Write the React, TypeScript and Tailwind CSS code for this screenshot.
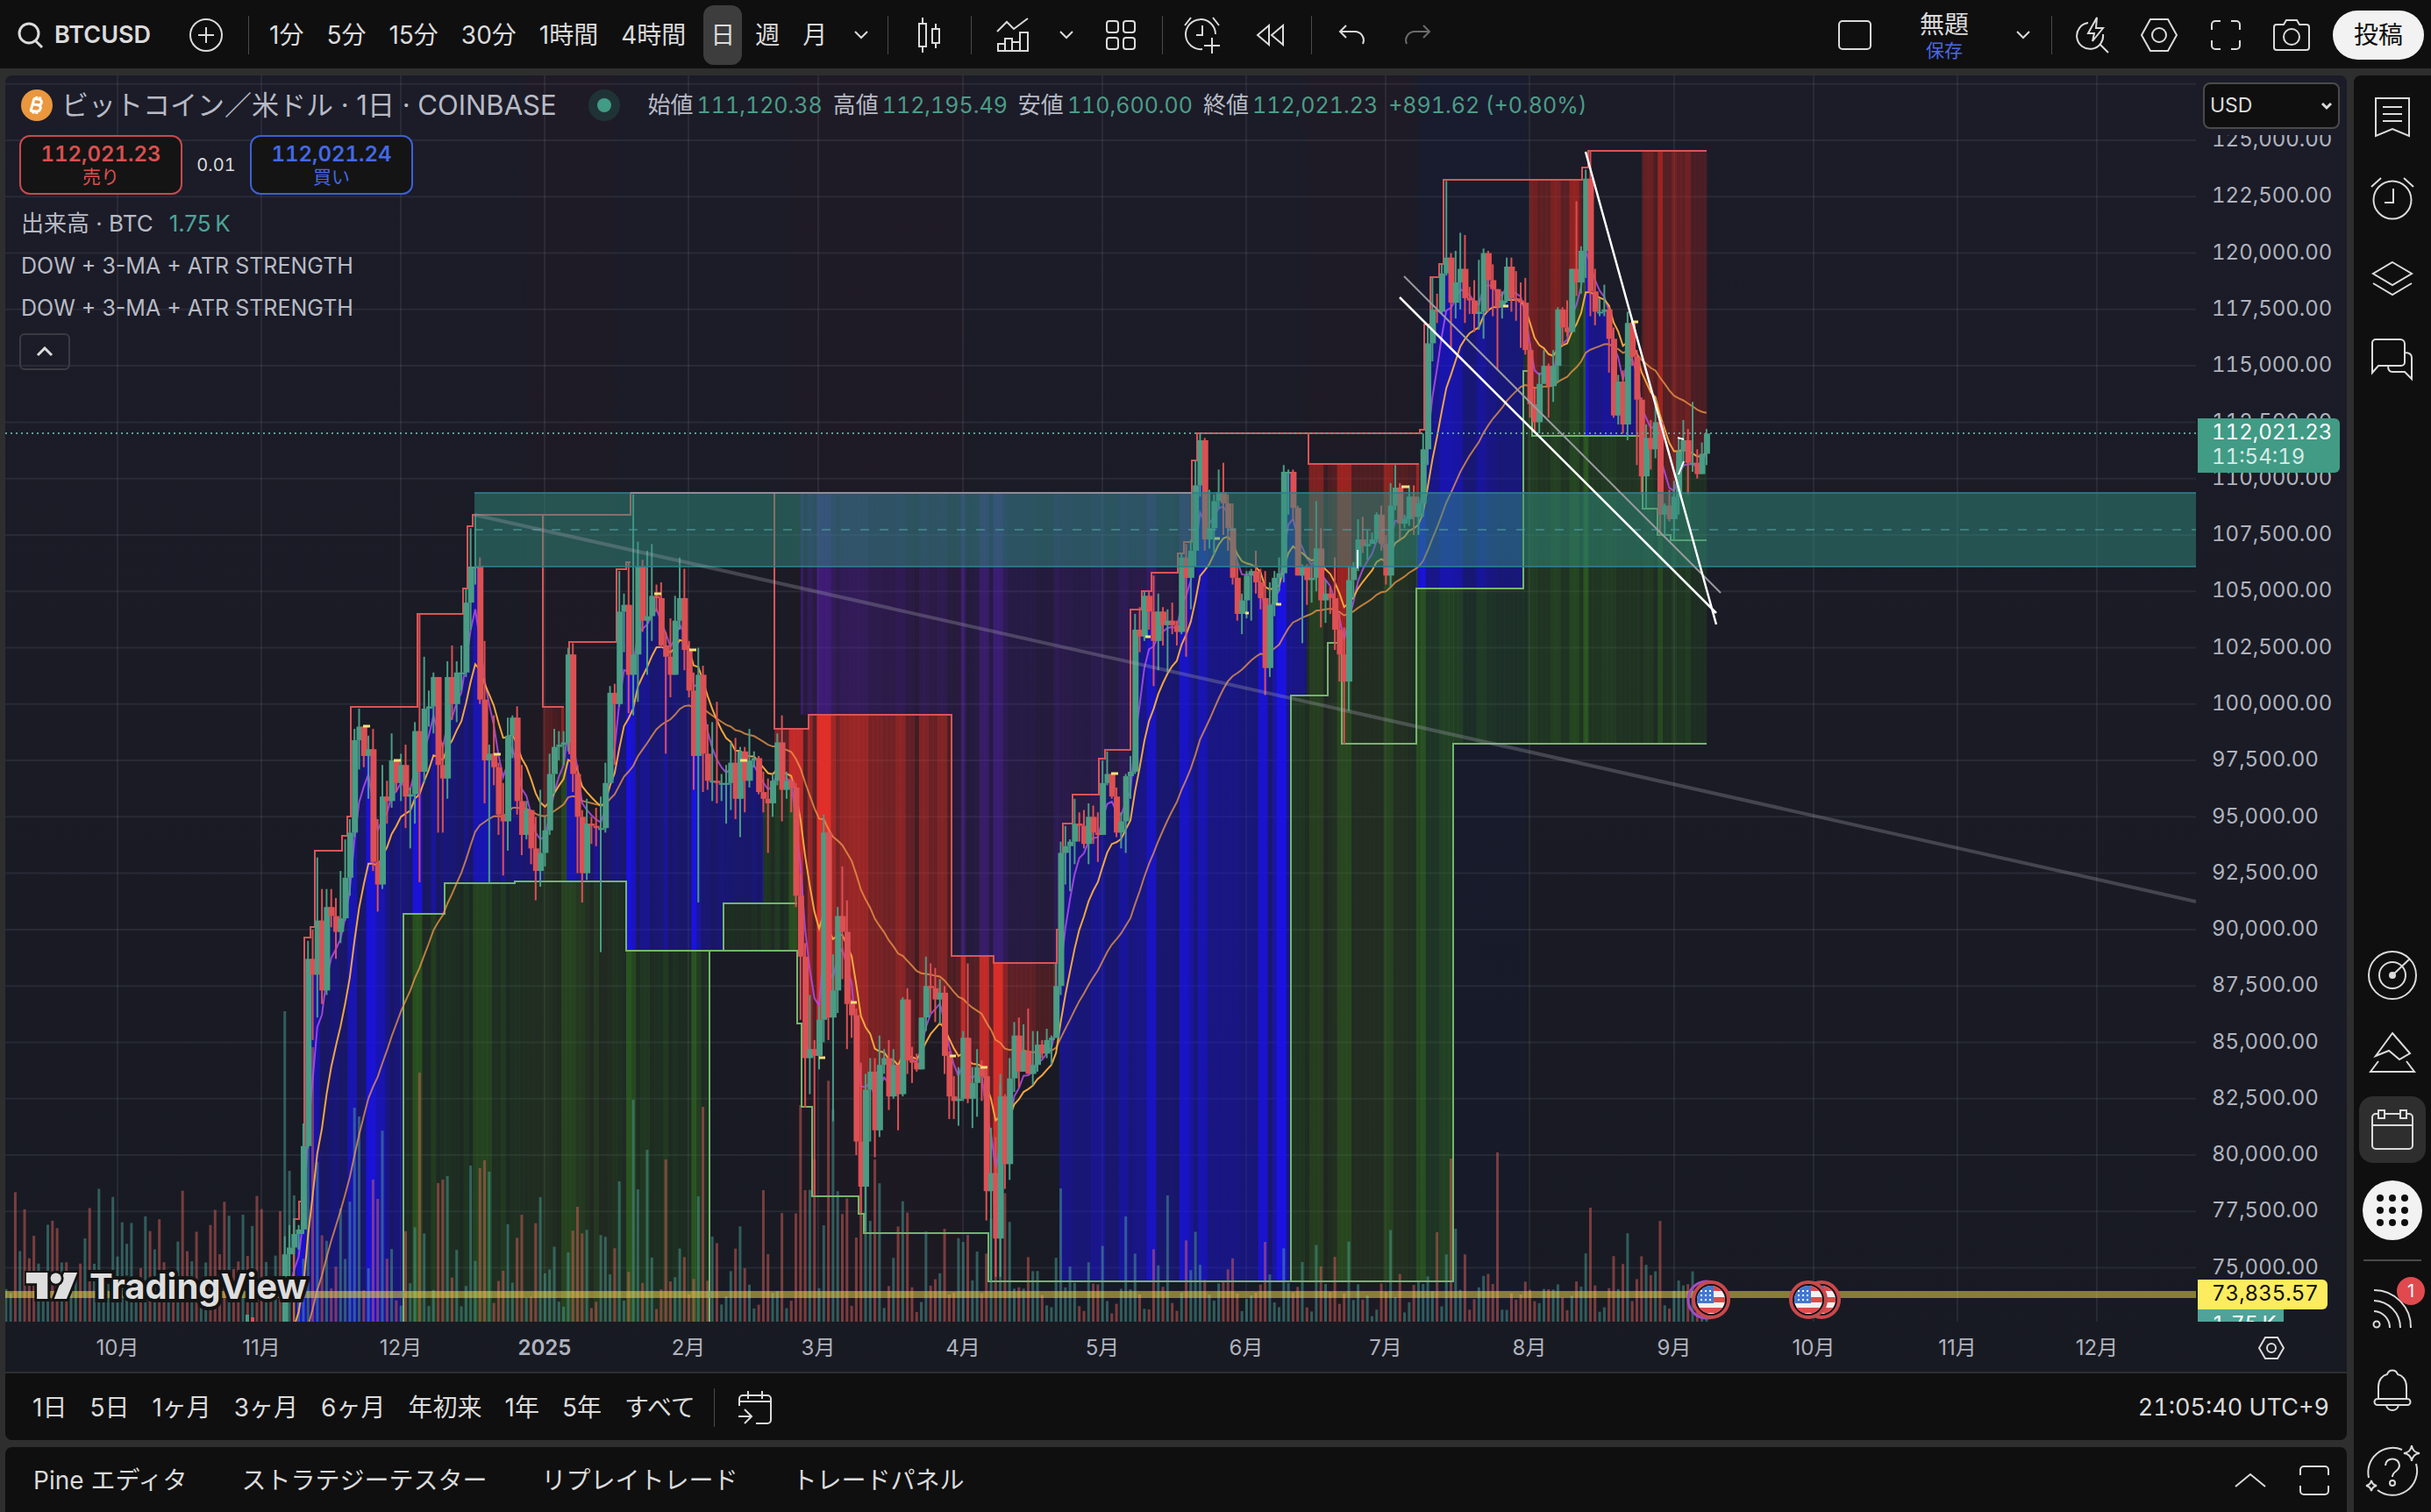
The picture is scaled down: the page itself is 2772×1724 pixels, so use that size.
import React from 'react';

// [close, high, low] in thousands of USD, one entry per day. Open is the previous close.
const NOV = [75.6,76.4,69.3, 75.9,76.9,74.5, 76.5,77.2,75.6, 76.7,76.9,75.8, 80.4,81.4,76.5, 88.7,89.5,80.3, 88.0,90.0,85.1, 90.4,93.2,86.1, 87.3,91.8,86.7, 91.0,91.8,87.1, 90.6,91.8,90.1, 89.9,91.4,88.7, 90.5,92.6,89.4, 92.3,94.0,90.4, 94.3,94.9,91.5, 98.4,98.9,94.1, 99.0,99.8,97.1, 97.7,98.9,97.2, 98.0,98.6,95.8, 93.0,98.9,92.6, 92.0,94.9,90.8, 95.9,97.3,91.8, 95.7,96.6,94.7, 97.5,98.7,95.4, 96.5,97.5,96.1];
const DEC = [97.3,97.8,95.7, 95.9,98.2,94.5, 96.0,96.3,93.6, 98.8,99.2,94.7, 97.0,104.0,92.1, 99.8,102.1,96.5, 99.9,100.6,99.0, 101.2,101.4,98.7, 97.3,101.2,94.3, 96.7,98.3,94.3, 101.2,101.9,95.8, 100.0,102.6,99.3, 101.4,101.9,99.2, 101.4,102.6,100.6, 104.5,105.1,101.2, 106.1,107.8,103.3, 106.1,108.4,105.3, 100.2,106.5,100.0, 97.5,102.8,95.6, 97.8,98.2,92.1, 97.2,99.5,96.4, 95.1,97.4,94.2, 94.8,96.5,92.4, 98.6,99.4,93.5, 99.4,99.5,97.6, 95.7,99.9,95.1, 94.2,97.3,93.3, 95.3,95.7,94.0, 93.6,95.3,92.9, 92.6,95.0,91.3, 93.4,96.2,91.9];
const JAN = [94.4,95.0,92.8, 96.9,97.8,94.2, 98.1,98.9,96.0, 98.2,98.8,97.5, 98.3,98.8,97.3, 102.2,102.5,97.9, 96.9,102.7,96.1, 95.0,97.3,92.5, 92.5,95.3,91.2, 94.7,95.8,92.2, 94.6,95.0,93.8, 94.5,95.4,93.7, 94.5,95.9,89.0, 96.5,97.4,94.3, 100.5,100.8,96.5, 100.0,100.9,97.3, 104.1,105.9,99.9, 104.4,104.9,102.3, 101.3,106.3,99.6, 102.2,109.3,99.5, 106.1,107.2,100.1, 103.7,106.4,103.2, 103.9,106.8,101.3, 104.8,107.1,102.8, 104.7,105.3,104.1, 102.6,105.4,102.5, 102.1,103.2,97.8, 101.3,103.8,100.3, 103.7,104.8,101.3, 104.7,106.5,103.3, 102.4,106.0,101.5];
const FEB = [100.6,102.8,100.3, 97.7,101.4,96.2, 101.3,102.5,91.2, 97.8,101.7,96.1, 96.6,99.1,96.2, 96.6,99.2,95.7, 96.5,100.1,95.6, 96.5,96.9,95.7, 96.5,97.3,94.7, 97.4,98.3,95.3, 95.8,98.5,94.9, 97.9,98.1,94.1, 96.6,98.1,95.2, 97.5,98.9,96.3, 97.6,97.9,97.2, 96.1,97.7,96.0, 95.8,97.0,95.2, 95.6,96.7,93.4, 96.6,96.9,95.0, 98.3,98.7,96.4, 96.2,99.5,94.8, 96.6,97.0,95.8, 96.3,96.7,95.2, 91.5,96.5,91.0, 88.8,92.5,86.0, 84.3,89.4,82.1, 84.7,87.1,82.7, 84.4,85.1,78.2];
const MAR = [86.0,86.6,83.8, 94.3,95.1,85.0, 86.1,94.4,85.1, 87.3,88.9,81.5, 90.6,91.0,86.3, 89.9,92.8,87.8, 86.7,91.3,84.7, 86.2,86.9,85.2, 80.6,86.5,80.0, 78.6,84.1,77.4, 82.9,83.6,76.6, 83.7,84.3,80.6, 81.1,84.3,79.9, 84.0,85.3,80.8, 84.3,84.7,83.6, 82.6,85.1,82.0, 84.0,84.7,82.5, 82.7,84.0,81.1, 86.9,87.0,82.6, 84.2,87.4,83.6, 84.1,84.8,83.2, 83.8,84.5,83.7, 86.1,86.1,83.8, 87.5,88.8,85.5, 87.4,88.5,86.3, 86.9,88.3,85.9, 87.2,87.8,85.8, 84.4,87.5,83.6, 82.6,84.6,81.6, 82.4,83.5,81.6, 82.5,83.9,81.3];
const APR = [85.2,85.5,82.4, 82.5,88.5,82.3, 83.2,83.9,81.2, 83.9,84.7,81.7, 83.5,84.2,82.4, 78.4,83.8,77.1, 79.2,81.2,74.4, 76.3,80.8,74.6, 82.6,83.6,74.6, 79.6,82.7,78.5, 83.4,84.3,78.9, 85.3,85.9,82.8, 83.7,86.1,83.0, 84.6,85.8,83.7, 83.6,86.5,83.6, 84.0,85.5,83.1, 84.9,85.5,83.7, 84.5,85.1,84.3, 85.1,85.6,84.3, 85.2,85.3,84.0, 87.5,88.5,85.2, 93.4,93.9,87.1, 93.7,94.6,92.0, 93.9,94.0,91.7, 94.7,95.8,92.9, 94.6,95.2,93.9, 93.8,95.3,93.6, 95.0,95.6,92.9, 94.3,95.5,93.8, 94.2,95.2,93.0];
const MAY = [96.5,97.5,94.2, 96.9,97.9,96.4, 95.9,96.9,95.8, 94.3,96.3,94.1, 94.8,95.2,93.6, 96.8,96.9,93.4, 97.0,97.7,95.8, 103.3,104.0,96.9, 103.0,104.3,102.3, 104.8,105.0,102.8, 104.1,105.0,103.3, 102.8,105.7,100.8, 104.1,104.9,101.5, 103.5,104.3,102.6, 103.7,104.2,101.4, 103.5,104.5,103.1, 103.2,103.7,102.6, 106.5,106.7,103.1, 105.6,107.1,102.1, 106.8,107.3,104.2, 109.7,110.8,106.1, 111.7,112.0,109.2, 107.3,111.8,106.8, 107.8,109.5,106.9, 109.0,109.3,106.6, 109.4,110.4,108.7, 108.9,110.7,107.5, 107.8,109.3,106.8, 105.6,108.9,105.3, 104.0,106.3,103.7, 104.6,104.9,103.1];
const JUN = [105.7,105.9,103.8, 105.9,106.0,103.7, 105.4,106.8,104.9, 104.7,106.0,104.2, 101.6,105.9,100.4, 104.4,105.4,101.2, 105.6,105.9,103.9, 105.8,106.5,105.0, 110.3,110.6,105.4, 110.3,110.4,108.4, 108.7,110.4,108.1, 105.7,108.8,105.7, 106.1,106.2,102.7, 105.5,106.2,104.4, 105.6,106.1,104.5, 106.9,109.0,105.0, 104.6,107.8,103.4, 104.9,105.5,103.6, 104.7,105.2,104.0, 103.3,106.5,102.4, 102.2,104.0,101.0, 101.0,103.4,98.2, 105.5,106.1,99.7, 106.1,106.3,104.7, 107.3,108.2,105.9, 107.0,108.3,106.7, 107.1,107.7,106.4, 107.3,107.6,107.2, 108.4,108.5,107.2, 107.1,108.8,106.8];
const JUL = [105.7,107.5,105.3, 108.8,109.8,105.2, 109.6,110.6,108.6, 108.0,109.8,107.3, 108.2,108.4,107.8, 109.2,109.7,107.9, 108.3,109.7,107.5, 108.9,109.2,107.5, 111.3,112.0,108.3, 116.0,116.8,110.6, 117.5,118.9,115.2, 117.4,118.2,116.9, 119.1,119.5,117.3, 119.8,123.2,119.0, 117.8,120.0,115.8, 118.7,120.1,117.1, 119.3,120.9,117.5, 118.0,120.8,116.9, 117.9,118.5,117.3, 117.3,118.8,116.5, 117.4,119.7,116.6, 120.0,120.2,116.2, 118.8,120.1,117.4, 118.4,119.5,117.2, 117.6,118.4,114.8, 117.9,118.3,117.1, 119.4,119.8,117.8, 118.0,119.8,117.4, 117.9,119.2,117.0, 117.8,118.7,115.8, 115.7,118.9,115.5];
const AUG = [113.3,116.0,112.7, 112.5,114.0,112.0, 114.2,114.7,112.0, 115.0,115.7,114.2, 114.1,115.1,112.7, 115.0,115.7,113.4, 117.5,117.6,114.3, 116.7,117.6,115.9, 116.5,117.9,116.3, 119.3,119.3,116.5, 118.7,122.3,118.1, 120.1,120.3,118.2, 123.3,123.7,118.9, 118.3,124.5,117.2, 117.4,119.3,116.8, 117.4,118.0,117.2, 117.5,118.6,117.2, 116.2,117.6,114.7, 112.8,116.7,112.7, 114.3,114.6,112.4, 112.4,114.8,112.0, 116.9,117.4,111.7, 115.4,117.0,115.0, 113.5,115.7,110.6, 110.1,113.6,109.3, 111.8,112.4,108.7, 111.3,112.6,110.4, 112.5,113.5,110.9, 108.4,112.6,107.5, 108.8,108.9,107.4, 108.2,109.5,108.1];
const SEP = [109.2,109.9,107.3, 111.2,111.8,108.4, 111.7,112.6,110.5, 110.7,112.2,109.3, 110.7,113.4,110.3, 110.2,111.3,110.0, 111.1,111.6,110.2, 112.0,112.2,110.6];
const FLAT = [...NOV, ...DEC, ...JAN, ...FEB, ...MAR, ...APR, ...MAY, ...JUN, ...JUL, ...AUG, ...SEP];

const FIRST_DAY = 36; // 6 Nov, counted from 1 Oct
const DAY_W = 5.298;
const PLOT_BOTTOM = 1507;
const UP = '#4a9c84';
const DOWN = '#dc5054';

const dayX = (d: number) => 134 + d * DAY_W;
const priceY = (p: number) => 160 + ((125 - p) / 2.5) * 64.28;
const noise = (n: number) => {
  const v = Math.sin(n * 127.1 + 311.7) * 43758.5453;
  return v - Math.floor(v);
};

interface Candle {
  d: number;
  open: number;
  close: number;
  high: number;
  low: number;
}

const candles: Candle[] = [];
for (let i = 0; i < FLAT.length; i += 3) {
  const prev = candles[candles.length - 1];
  candles.push({ d: FIRST_DAY + i / 3, open: prev ? prev.close : 69.4, close: FLAT[i], high: FLAT[i + 1], low: FLAT[i + 2] });
}

const emaPath = (length: number, seed: number) => {
  let value = seed;
  const k = 2 / (length + 1);
  return candles
    .map((c, i) => {
      value += (c.close - value) * k;
      return `${i ? 'L' : 'M'}${dayX(c.d).toFixed(1)} ${priceY(value).toFixed(1)}`;
    })
    .join('');
};

type Tone = 'blue' | 'green' | 'red' | 'maroon' | 'purple';
// tone, from x, to x, top, bottom; null follows the price
type Zone = [Tone, number, number, number | null, number | null];

const ZONES: Zone[] = [
  ['blue', 338, 460, null, 1507],
  ['blue', 460, 507, null, 1042],
  ['blue', 507, 619, null, 1006],
  ['green', 619, 646, null, 1006],
  ['blue', 646, 714, null, 1006],
  ['blue', 714, 825, null, 1084],
  ['blue', 825, 870, null, 1030],
  ['green', 870, 909, null, 1030],
  ['green', 825, 909, 1030, 1084],
  ['green', 460, 507, 1042, 1507],
  ['green', 507, 714, 1006, 1507],
  ['green', 714, 809, 1084, 1507],
  ['purple', 913, 1085, 562, 815],
  ['purple', 1085, 1133, 562, 1090],
  ['purple', 1133, 1205, 562, 1098],
  ['purple', 1205, 1359, 562, null],
  ['maroon', 619, 643, 806, null],
  ['red', 883, 922, 831, null],
  ['red', 922, 1085, 815, null],
  ['red', 1085, 1133, 1090, null],
  ['red', 1133, 1205, 1098, null],
  ['maroon', 1492, 1618, 529, null],
  ['maroon', 1744, 1804, 205, null],
  ['maroon', 1872, 1946, 172, null],
  ['blue', 1208, 1472, null, 1461],
  ['blue', 1472, 1490, null, 793],
  ['green', 1472, 1490, 793, 1461],
  ['green', 1490, 1616, null, 1461],
  ['blue', 1616, 1737, null, 671],
  ['green', 1616, 1657, 671, 1461],
  ['green', 1657, 1737, 671, 848],
  ['green', 1737, 1808, null, 848],
  ['blue', 1808, 1867, null, 497],
  ['green', 1808, 1867, 497, 848],
  ['green', 1867, 1946, null, 848],
];

const TONES: Record<Tone, { fill: string; base: number; span: number }> = {
  blue: { fill: '#1a12f5', base: 0.24, span: 0.7 },
  green: { fill: '#357a1e', base: 0.12, span: 0.5 },
  red: { fill: '#e8302a', base: 0.16, span: 0.8 },
  maroon: { fill: '#cc281f', base: 0.14, span: 0.8 },
  purple: { fill: '#5a1fb8', base: 0.12, span: 0.4 },
};

// ATR strength: from x, to x, level
const STRENGTH = [
  [338, 350, 0.8], [355, 362, 0.5], [397, 405, 0.6], [417, 426, 0.85], [426, 436, 0.6], [438, 444, 0.3], [472, 479, 0.85],
  [494, 499, 0.45], [505, 510, 0.45], [527, 535, 0.3], [541, 558, 0.6], [572, 579, 0.4], [584, 590, 0.2], [619, 628, 0.2],
  [642, 654, 0.6], [654, 666, 0.4], [679, 684, 0.4], [696, 706, 0.25], [713, 720, 0.95], [720, 727, 0.7], [732, 738, 0.35],
  [754, 760, 0.4], [777, 780, 0.3], [789, 796, 0.95], [796, 800, 0.5], [870, 876, 0.3], [886, 891, 0.4], [902, 918, 0.8],
  [922, 928, 0.5], [933, 945, 1], [945, 950, 0.6], [950, 958, 0.35], [959, 966, 0.5], [971, 987, 0.55], [987, 1003, 0.35],
  [1003, 1008, 0.02], [1008, 1024, 0.3], [1024, 1032, 0.45], [1032, 1040, 0.2], [1040, 1046, 0.02], [1046, 1056, 0.4],
  [1056, 1071, 0.25], [1071, 1078, 0.4], [1098, 1103, 0.75], [1118, 1130, 0.8], [1135, 1141, 0.95], [1141, 1150, 0.45],
  [1150, 1180, 0.2], [1180, 1203, 0.08], [1203, 1209, 0.45], [1209, 1225, 0.3], [1225, 1245, 0.2], [1246, 1258, 0.35],
  [1258, 1275, 0.15], [1277, 1286, 0.45], [1289, 1294, 1], [1294, 1308, 0.3], [1310, 1319, 0.7], [1319, 1339, 0.15],
  [1342, 1354, 0.75], [1354, 1362, 0.5], [1365, 1374, 0.6], [1374, 1412, 0.28], [1412, 1436, 0.22], [1437, 1447, 0.8],
  [1450, 1456, 0.5], [1458, 1464, 0.95], [1464, 1474, 0.3], [1474, 1485, 0.3], [1485, 1494, 0.1], [1495, 1510, 0.5],
  [1511, 1516, 0.02], [1517, 1526, 0.2], [1527, 1538, 0.7], [1538, 1578, 0.16], [1579, 1586, 0.6], [1586, 1602, 0.2],
  [1602, 1616, 0.15], [1617, 1622, 0.7], [1622, 1628, 0.9], [1628, 1643, 0.3], [1643, 1656, 0.55], [1656, 1670, 0.48],
  [1670, 1686, 0.15], [1686, 1693, 0.4], [1693, 1704, 0.25], [1704, 1740, 0.18], [1741, 1750, 0.4], [1750, 1770, 0.28],
  [1770, 1777, 0.5], [1777, 1790, 0.25], [1791, 1798, 0.65], [1798, 1807, 0.3], [1807, 1813, 0.95], [1813, 1828, 0.3],
  [1828, 1840, 0.4], [1840, 1870, 0.25], [1872, 1887, 0.35], [1888, 1893, 0.72], [1893, 1906, 0.22], [1906, 1914, 0.42],
  [1914, 1923, 0.3], [1923, 1930, 0.42], [1930, 1950, 0.15],
];

const strips = ZONES.flatMap(([tone, x0, x1, top, bottom]) => {
  const out = [];
  for (const c of candles) {
    const cx = dayX(c.d);
    const left = Math.max(cx - DAY_W / 2, x0);
    const right = Math.min(cx + DAY_W / 2, x1);
    if (right <= left) continue;
    const mid = priceY((c.open + c.close) / 2);
    const y0 = top ?? mid;
    const y1 = bottom ?? mid;
    if (y1 <= y0) continue;
    const t = TONES[tone];
    const hit = STRENGTH.find(([a, b]) => cx >= a && cx < b);
    const level = hit ? hit[2] : 0.06 + noise(c.d + 900) * 0.16;
    out.push({ x: left, y: y0, w: right - left + 0.4, h: y1 - y0, fill: t.fill, o: t.base + t.span * level });
  }
  return out;
});

const TALL: Record<number, number> = {
  36: 354, 37: 172, 38: 144, 41: 331, 42: 313, 43: 182, 51: 244, 52: 234, 55: 162, 56: 140, 65: 284, 69: 158, 70: 162, 71: 166,
  76: 178, 78: 175, 79: 184, 80: 171, 99: 131, 108: 160, 111: 253, 112: 151, 114: 196, 118: 185, 126: 245, 139: 150,
  147: 247, 148: 150, 150: 185, 163: 185, 203: 152, 217: 120, 226: 144, 284: 102, 288: 106, 287: 186, 297: 193, 317: 130,
};
const volumes: { x: number; h: number; up: boolean }[] = [];
for (let d = -24; d <= 342; d++) {
  const c = candles[d - FIRST_DAY];
  const range = c ? ((c.high - c.low) / c.close) * 100 : 3.4;
  const day = (d + 28 + 2) % 7;
  const weight = (d < 60 ? 1.4 : d < 200 ? 1 : 0.8) * (day === 0 || day === 6 ? 0.5 : 1.05);
  const h = TALL[d] ?? (12 + range * 18 * (0.5 + noise(d + 40))) * weight;
  volumes.push({ x: dayX(d), h, up: c ? c.close >= c.open : noise(d + 7) > 0.5 });
}

const HIGHS = 'M335 1507V1390H341V1370H347V1069H354V1057H359V970H390V953H396V931H400V806H476V700H528V671H533V600H539V587H719V562H1359M619 587V806H643M649 860V732H703V649H714V641H719M883 562V831H922V815H1085V1090H1133V1098H1205V1060H1212V939H1223V906H1253V865H1260V855H1289V695H1302V674H1313V653H1343V631H1350V618H1359V525H1365V494H1621M1492 494V529H1618M1619 494V490H1624V370H1631V316H1641V301H1646V205H1804V191H1811V172H1946';
const LOWS = 'M460 1507V1042H507V1007H587V1005H714V1084H909V1167H914V1262H926V1364H979V1384H985V1406H1127V1461H1657V848H1946M809 1084V1507M825 1084V1030H909M1472 1461V793H1514V733H1530V848H1615V671H1737V423H1747V497H1873V580H1890V610H1905V616H1946';

const MONTH_X = [134, 298, 457, 621, 785, 933, 1098, 1257, 1421, 1580, 1744, 1909, 2068, 2232, 2391];
const MONTHS: [string, number][] = [
  ['10月', 128], ['11月', 164], ['12月', 159], ['2025', 164], ['2月', 164], ['3月', 148], ['4月', 165], ['5月', 159],
  ['6月', 164], ['7月', 159], ['8月', 164], ['9月', 165], ['10月', 159], ['11月', 164], ['12月', 159],
];
const PRICES = Array.from({ length: 21 }, (_, i) => `${(125000 - i * 2500).toLocaleString('en-US')}.00`);

const Flag = ({ x, ring = '#c8494c' }: { x: number; ring?: string }) => (
  <g transform={`translate(${x} 1482)`}>
    <circle r="20" fill="#1b1016" stroke={ring} strokeWidth="4" />
    <clipPath id={`flag${x}`}><circle r="16" /></clipPath>
    <g clipPath={`url(#flag${x})`}>
      <rect x="-16" y="-16" width="32" height="32" fill="#f4f0f0" />
      <path d="M0-13H16M0 0H16M-16 12H16" stroke="#dd4b4b" strokeWidth="6" />
      <rect x="-16" y="-16" width="19" height="20" fill="#4378d0" />
      <path d="M-12-10h2m3 0h2m3 0h2M-12-5h2m3 0h2m3 0h2M-12 0h2m3 0h2m3 0h2" stroke="#fff" strokeWidth="2" />
    </g>
  </g>
);

const ChartPlot = () => (
  <svg viewBox="6 86 2498 1421" preserveAspectRatio="none" className="absolute inset-0 h-full w-full">
    <path d="M600 86H700V1507H600zM900 86H1100V1507H900zM1490 86H1610V1507H1490z" fill="#40141c" opacity=".1" />
    <path d="M1620 86H1740V1507H1620z" fill="#14245a" opacity=".12" />
    <g stroke="#9aa0b4" strokeOpacity=".11" strokeWidth="2">
      {MONTH_X.map((x) => <path key={x} d={`M${x} 86V1507`} />)}
      {Array.from({ length: 22 }, (_, i) => <path key={i} d={`M6 ${95.7 + i * 64.28}H2504`} />)}
    </g>

    {strips.map((s, i) => <rect key={i} x={s.x} y={s.y} width={s.w} height={s.h} fill={s.fill} opacity={s.o} />)}

    {volumes.map((v) => (
      <rect key={v.x} x={v.x - 1.5} y={PLOT_BOTTOM - v.h} width="3" height={v.h} fill={v.up ? '#4aa096' : '#d9605a'} opacity=".5" />
    ))}
    <rect x="6" y="1472" width="2498" height="8" fill="#ffeb50" opacity=".48" />

    <path d={HIGHS} fill="none" stroke="#d95458" strokeWidth="2" />
    <path d={LOWS} fill="none" stroke="#74b56c" strokeWidth="2" />

    <path d={emaPath(40, 70)} fill="none" stroke="#f2994a" strokeWidth="2" opacity=".75" />
    <path d={emaPath(5, 72)} fill="none" stroke="#b24df0" strokeWidth="2" opacity=".85" />
    <path d={emaPath(12, 70)} fill="none" stroke="#f4a63f" strokeWidth="2" />
    {candles.map((c) => {
      const x = dayX(c.d);
      const color = c.close >= c.open ? UP : DOWN;
      const top = priceY(Math.max(c.open, c.close));
      return (
        <g key={c.d} fill={color}>
          <rect x={x - 1} y={priceY(c.high)} width="2" height={priceY(c.low) - priceY(c.high)} />
          <rect x={x - 3} y={top} width="7" height={Math.max(2, priceY(Math.min(c.open, c.close)) - top)} />
        </g>
      );
    })}
    <rect x="280" y="1499" width="4" height="8" fill={UP} />
    <rect x="286" y="1502" width="4" height="5" fill={DOWN} />
    <path d="M414 828h8M449 867h8M563 860h8M746 677h8M786 741h8M844 867h8M934 1206h7M970 1143h7M1083 1204h7M1118 1217h8M1267 882h8M1306 726h6M1385 614h6M1420 699h4M1455 689h6M1598 555h9M1714 349h6M1860 367h8" stroke="#f6e27a" strokeWidth="3" />

    <rect x="541" y="562" width="1963" height="84" fill="#2f8c7e" opacity=".5" />
    <path d="M541 562H2504M541 646H2504" stroke="#2f7f90" strokeWidth="2" opacity=".8" />
    <path d="M541 604H2504" stroke="#4c9c9c" strokeWidth="2" strokeDasharray="10 12" opacity=".6" />
    <path d="M719 562H1359" stroke="#8f8d9b" strokeWidth="2" />
    <path d="M541 587L2504 1028" stroke="#a8a8b4" strokeWidth="4" opacity=".3" />
    <path d="M6 494H2504" stroke="#5f9f92" strokeWidth="2" strokeDasharray="2 4" />
    <path d="M1548 627V648M1913 499l7 2M1914 541l6-15" stroke="#fff" strokeWidth="2" fill="none" />
    <path d="M1601 315L1962 676" stroke="#9a9a9f" strokeWidth="2" />
    <path d="M1596 339L1957 699M1808 173L1957 712" stroke="#fff" strokeWidth="2.5" />

    <circle cx="1946" cy="1482" r="21" fill="none" stroke="#a24bc9" strokeWidth="3" />
    <Flag x={1951} />
    <Flag x={2077} />
    <Flag x={2062} />
  </svg>
);

interface IconProps {
  d: string;
  w?: number;
  h?: number;
  sw?: number;
  children?: React.ReactNode;
}

const Icon = ({ d, w = 44, h = 44, sw = 2, children }: IconProps) => (
  <svg width={w} height={h} viewBox={`0 0 ${w} ${h}`} fill="none" stroke="currentColor" strokeWidth={sw} className="shrink-0">
    <path d={d} />
    {children}
  </svg>
);

const Tool = ({ label, className, children }: { label: string; className: string; children: React.ReactNode }) => (
  <button aria-label={label} className={`flex h-full shrink-0 items-center justify-center ${className}`}>
    {children}
  </button>
);

const Divider = ({ className = '' }: { className?: string }) => <div className={`h-11 w-px shrink-0 bg-[#4a4a4a] ${className}`}></div>;

const Chevron = () => <Icon w={16} h={10} d="M1 1L8 8L15 1" />;

const HEX = 'M12 4H32L42 22L32 40H12L2 22Z';
const INTERVALS = ['1分', '5分', '15分', '30分', '1時間', '4時間', '日', '週', '月'];

const Header = () => (
  <header className="flex h-[78px] shrink-0 items-center bg-[#0f0f0f] pt-0.5 text-[28px]">
    <button className="flex h-full w-[205px] shrink-0 items-center gap-3 pl-5 text-[27px] font-semibold">
      <Icon w={30} h={32} sw={3} d="M20 22L28 30"><circle cx="13" cy="14" r="11" /></Icon>
      BTCUSD
    </button>
    <Tool label="シンボルを追加" className="w-[60px]">
      <Icon w={40} h={40} d="M20 11V29M11 20H29"><circle cx="20" cy="20" r="18" /></Icon>
    </Tool>
    <Divider className="mr-[10px] ml-[18px]" />
    {INTERVALS.map((name) => (
      <button key={name} className={`h-[68px] shrink-0 rounded-xl ${name === '日' ? 'bg-[#3d3d3d] px-2 ml-[7px] mr-0.5' : 'px-[13px]'}`}>{name}</button>
    ))}
    <Tool label="時間足" className="w-[52px]"><Chevron /></Tool>
    <Divider className="ml-1" />
    <Tool label="チャートタイプ" className="w-[94px]">
      <Icon w={28} h={44} d="M6 2V9M6 35V42M2 9H10V35H2ZM21 9V15M21 31V37M17 15H25V31H17Z" />
    </Tool>
    <Divider />
    <Tool label="インジケーター" className="w-[94px]">
      <Icon w={38} h={40} d="M1 16L12 5L20 13L36 1M2 38V30H10V38M10 38V24H18V38M18 38V28H27V38M27 38V17H36V38ZM1 38H37" />
    </Tool>
    <Tool label="お気に入りのインジケーター" className="w-7"><Chevron /></Tool>
    <Tool label="レイアウト" className="w-[95px]">
      <Icon w={34} h={34} d="">
        <rect x="1" y="1" width="13" height="13" rx="3" /><rect x="20" y="1" width="13" height="13" rx="3" />
        <rect x="1" y="20" width="13" height="13" rx="3" /><rect x="20" y="20" width="13" height="13" rx="3" />
      </Icon>
    </Tool>
    <Divider />
    <Tool label="アラートを作成" className="w-[90px]">
      <Icon d="M22 38A17 17 0 1 1 37 21M22 11V22H15M2 11L9 2M34 2L41 11M33 25V43M24 34H42" />
    </Tool>
    <Tool label="リプレイ" className="w-[66px]">
      <Icon w={34} h={26} d="M15 2V24L2 13ZM31 2V24L18 13Z" />
    </Tool>
    <Divider className="ml-[13px]" />
    <Tool label="元に戻す" className="w-[90px]">
      <Icon w={30} h={24} d="M9 1L2 8L9 15M2 8H18A10 10 0 0 1 28 22" />
    </Tool>
    <Tool label="やり直し" className="w-[62px] text-[#6b6b6b]">
      <Icon w={30} h={24} d="M21 1L28 8L21 15M28 8H12A10 10 0 0 0 2 22" />
    </Tool>

    <div className="ml-auto flex h-full items-center">
      <Tool label="レイアウト設定" className="w-[88px]">
        <Icon w={38} h={34} d=""><rect x="1" y="1" width="36" height="32" rx="4" /></Icon>
      </Tool>
      <button className="flex w-[116px] shrink-0 flex-col items-center pt-1">
        <span className="leading-8">無題</span>
        <span className="text-[21px] leading-7 text-[#4a68e0]">保存</span>
      </button>
      <Tool label="レイアウト一覧" className="w-16"><Chevron /></Tool>
      <Divider className="mr-[18px]" />
      <Tool label="クイック検索" className="w-14">
        <Icon w={38} h={44} d="M14 8A15 15 0 1 0 31 21M27 32L37 42M24 2L14 20H21L19 29L31 14H23Z" />
      </Tool>
      <Tool label="設定" className="w-24"><Icon d={HEX}><circle cx="22" cy="22" r="8" /></Icon></Tool>
      <Tool label="全画面" className="w-14">
        <Icon w={34} h={34} d="M1 11V5A4 4 0 0 1 5 1H11M23 1H29A4 4 0 0 1 33 5V11M33 23V29A4 4 0 0 1 29 33H23M11 33H5A4 4 0 0 1 1 29V23" />
      </Tool>
      <Tool label="スナップショット" className="w-[94px]">
        <Icon w={42} h={36} d="M4 6H12L15 1H27L30 6H38A3 3 0 0 1 41 9V32A3 3 0 0 1 38 35H4A3 3 0 0 1 1 32V9A3 3 0 0 1 4 6Z"><circle cx="21" cy="20" r="9" /></Icon>
      </Tool>
      <button className="mr-2 h-14 w-[104px] rounded-full bg-[#f2f2f2] text-[#0f0f0f]">投稿</button>
    </div>
  </header>
);

const OHLC = [['始値', '111,120.38'], ['高値', '112,195.49'], ['安値', '110,600.00'], ['終値', '112,021.23']];

const Legend = () => (
  <div className="relative flex flex-col items-start pl-4 pt-4 text-[25px] text-[#b8bac4]">
    <div className="flex h-9 items-center whitespace-nowrap">
      <svg width="36" height="36" viewBox="0 0 36 36" className="ml-0.5">
        <circle cx="18" cy="18" r="18" fill="#ea973e" />
        <path d="M14 11L12 25M13 11H19.5C24 11 24 17.500 19 17.500H13.500M19 17.500C24.500 17.500 23.500 25 18 25H11M16.500 8V11M20.500 8V11M15 25V28M19 25V28" transform="rotate(8 18 18)" fill="none" stroke="#fff" strokeWidth="3" />
      </svg>
      <h1 className="ml-2.5 text-[31px]">ビットコイン／米ドル · 1日 · COINBASE</h1>
      <span className="ml-9 flex h-9 w-9 items-center justify-center rounded-full bg-[#1f3336]">
        <span className="h-4 w-4 rounded-full bg-[#419b85]"></span>
      </span>
      <div className="ml-8 flex gap-3 text-[25px]">
        {OHLC.map(([name, value]) => (
          <span key={name} className="flex items-baseline gap-1"><span className="text-[26px]">{name}</span><span className="tabular-nums text-[#4c9c87]">{value}</span></span>
        ))}
        <span className="self-end tabular-nums text-[#4c9c87]">+891.62 (+0.80%)</span>
      </div>
    </div>
    <div className="mt-4 flex items-center tabular-nums">
      <button className="flex h-[68px] w-[186px] flex-col items-center justify-center rounded-xl border-2 border-[#c8494c] bg-[#141414] text-[#d9504f]">
        <span className="text-2xl leading-7 font-semibold">112,021.23</span>
        <span className="text-[21px] leading-6">売り</span>
      </button>
      <span className="w-[77px] text-center text-xl text-[#dbdbdb]">0.01</span>
      <button className="flex h-[68px] w-[186px] flex-col items-center justify-center rounded-xl border-2 border-[#3f5fd6] bg-[#141414] text-[#4468e8]">
        <span className="text-2xl leading-7 font-semibold">112,021.24</span>
        <span className="text-[21px] leading-6">買い</span>
      </button>
    </div>
    <div className="mt-2 flex h-12 items-center gap-[18px] pl-0.5 text-[26px]">出来高 · BTC <span className="text-[#4fa398]">1.75{'\u2009'}K</span></div>
    <div className="mt-0.5 flex h-12 items-center pl-0.5">DOW + 3-MA + ATR STRENGTH</div>
    <div className="flex h-12 items-center pl-0.5">DOW + 3-MA + ATR STRENGTH</div>
    <button aria-label="インジケーターを隠す" className="mt-1 flex h-[42px] w-[58px] items-center justify-center rounded-md border-2 border-[#3a3b42] text-[#dbdbdb]">
      <Icon w={20} h={12} sw={3} d="M2 10L10 2L18 10" />
    </button>
  </div>
);

const Watermark = () => (
  <div className="absolute bottom-4 left-[22px] flex items-center gap-3">
    <svg width="62" height="36" viewBox="-2 -2 66 38" fill="#dedede" stroke="#141414" strokeWidth="6" paintOrder="stroke">
      <path d="M0 0H26V32H13V13H0ZM46 0H62L49 32H34Z" />
      <circle cx="36" cy="7" r="6.500" />
    </svg>
    <span className="text-[40px] leading-[48px] font-bold text-[#dedede] [-webkit-text-stroke:8px_#141414] [paint-order:stroke_fill]">TradingView</span>
  </div>
);

const PriceAxis = () => (
  <div className="relative flex w-[172px] shrink-0 flex-col overflow-hidden pt-[41px] pb-[30px] text-2xl tabular-nums text-[#b0b3bd]">
    {PRICES.map((p) => <div key={p} className="flex min-h-0 flex-1 items-center pl-[18px]">{p}</div>)}
    <div className="absolute inset-x-0 top-0 h-[68px] bg-[#1b1c28] pt-2 pl-2">
      <div className="relative w-[156px]">
        <select aria-label="通貨" className="h-[53px] w-full appearance-none rounded-lg border-2 border-[#4a4a4a] bg-[#0f0f0f] px-[6px] text-[23px] text-[#dbdbdb]">
          <option>USD</option>
        </select>
        <div className="pointer-events-none absolute top-[22px] right-2 text-[#dbdbdb]"><Icon w={14} h={10} sw={3} d="M2 2L7 7L12 2" /></div>
      </div>
    </div>
    <div className="absolute top-[27.500%] left-0.5 w-[162px] rounded-r-md bg-[#419b85] pt-0.5 pb-1 pl-4 leading-7 text-white">
      <div>112,021.23</div>
      <div className="text-[#d5ebe5]">11:54:19</div>
    </div>
    <div className="absolute bottom-[-20px] left-0.5 w-[98px] bg-[#4fa398] pl-4 leading-[34px] whitespace-nowrap text-white">1.75{'\u2009'}K</div>
    <div className="absolute bottom-[14px] left-0.5 w-[148px] rounded-r-md bg-[#fdec5f] pb-0.5 pl-4 leading-8 text-[#0f0f0f]">73,835.57</div>
  </div>
);

const TimeAxis = () => (
  <div className="flex h-[59px] shrink-0 border-b-2 border-[#2e2e2e] pt-0.5 text-2xl text-[#b0b3bd]">
    <div className="flex flex-1 items-center">
      {MONTHS.map(([name, gap], i) => (
        <React.Fragment key={i}>
          <span className="basis-0" style={{ flexGrow: gap }}></span>
          <span className={`flex w-0 justify-center whitespace-nowrap ${name === '2025' ? 'font-semibold' : ''}`}>{name}</span>
        </React.Fragment>
      ))}
      <span className="basis-0" style={{ flexGrow: 113 }}></span>
    </div>
    <button aria-label="軸の設定" className="flex w-[172px] shrink-0 items-center justify-center text-[#dbdbdb]">
      <Icon w={30} h={28} d="M8 2H22L29 14L22 26H8L1 14Z"><circle cx="15" cy="14" r="5" /></Icon>
    </button>
  </div>
);

const RANGES = ['1日', '5日', '1ヶ月', '3ヶ月', '6ヶ月', '年初来', '1年', '5年', 'すべて'];

const RangeBar = () => (
  <div className="flex h-[76px] shrink-0 items-center bg-[#0f0f0f] pt-0.5 pr-5 pl-[18px] text-[28px]">
    {RANGES.map((r) => <button key={r} className="h-full px-[13px]">{r}</button>)}
    <Divider className="ml-2" />
    <Tool label="日付へ移動" className="w-[92px]">
      <Icon w={40} h={40} d="M2 18V10A4 4 0 0 1 6 6H34A4 4 0 0 1 38 10V34A4 4 0 0 1 34 38H21M2 13H38M12 1V10M28 1V10M1 30H15M8 22L16 30L8 38" />
    </Tool>
    <span className="ml-auto text-[27px] tabular-nums">21:05:40 UTC+9</span>
  </div>
);

const PANELS = ['Pine エディタ', 'ストラテジーテスター', 'リプレイトレード', 'トレードパネル'];

const BottomPanel = () => (
  <div className="flex h-[74px] shrink-0 items-center rounded-t-lg bg-[#0f0f0f] pt-0.5 pl-8 text-[28px]">
    <nav className="flex gap-[62px]">
      {PANELS.map((p) => <button key={p}>{p}</button>)}
    </nav>
    <Tool label="パネルを開く" className="ml-auto w-[72px]"><Icon w={36} h={18} d="M1 16L18 2L35 16" /></Tool>
    <Tool label="パネルを最大化" className="w-[74px]">
      <Icon w={34} h={34} d="M1 11V5A4 4 0 0 1 5 1H29A4 4 0 0 1 33 5V11M1 23V29A4 4 0 0 0 5 33H29A4 4 0 0 0 33 29V23" />
    </Tool>
  </div>
);

const Sidebar = () => (
  <aside className="flex w-[88px] shrink-0 flex-col items-center rounded-tl-lg bg-[#0f0f0f] pt-0.5">
    <Tool label="ウォッチリスト" className="max-h-[92px] w-full">
      <Icon w={42} h={48} d="M2 2H40V45L21 37L2 45ZM10 12H32M10 20H32M10 28H32" />
    </Tool>
    <Tool label="アラート" className="max-h-[92px] w-full">
      <Icon w={52} h={50} d="M27 14V30H17M2 12L13 2M39 2L50 12"><circle cx="26" cy="27" r="21.500" /></Icon>
    </Tool>
    <Tool label="オブジェクトツリー" className="max-h-[92px] w-full">
      <Icon w={48} h={42} d="M24 2L46 15L24 28L2 15ZM2 26L24 39L46 26" />
    </Tool>
    <Tool label="チャット" className="max-h-[92px] w-full">
      <Icon w={50} h={50} d="M6 2H34A5 5 0 0 1 39 7V28A4 4 0 0 1 35 32H9L2 40V6A4 4 0 0 1 6 2ZM39 17C44 17 47 19 47 23V47L39 39H25C21 39 20 36 20 32" />
    </Tool>

    <Tool label="スクリーナー" className="mt-auto max-h-[88px] w-full">
      <Icon w={58} h={58} d="M29 29L49 10"><circle cx="29" cy="29" r="27" /><circle cx="29" cy="29" r="15" /><circle cx="29" cy="29" r="3" fill="currentColor" /></Icon>
    </Tool>
    <Tool label="Pine" className="max-h-[88px] w-full">
      <Icon w={54} h={48} d="M27 2L47 25L35 32L23 22L8 28ZM11 34L2 46H52L43 34" />
    </Tool>
    <Tool label="カレンダー" className="max-h-[88px] w-full">
      <span className="flex h-[76px] w-[76px] items-center justify-center rounded-2xl bg-[#2e2e2e]">
        <Icon w={50} h={50} d="M8 7H6A4 4 0 0 0 2 11V43A4 4 0 0 0 6 47H44A4 4 0 0 0 48 43V11A4 4 0 0 0 44 7H42M16 7H34M2 20H48M9 3H16V12H9ZM34 3H41V12H34Z" />
      </span>
    </Tool>
    <Tool label="プロダクト" className="max-h-24 w-full">
      <span className="grid h-[68px] w-[68px] grid-cols-[8px_8px_8px] place-content-center gap-1.5 rounded-full bg-[#f2f2f2]">
        {Array.from({ length: 9 }, (_, i) => <span key={i} className="h-2 w-2 rounded-sm bg-[#0f0f0f]"></span>)}
      </span>
    </Tool>
    <div className="mt-2 mb-1 h-0.5 w-[66px] shrink-0 bg-[#4a4a4a]"></div>
    <button aria-label="アイデアストリーム" className="relative flex h-[100px] w-full shrink-0 items-center justify-center">
      <Icon w={46} h={46} d="M2 2A42 42 0 0 1 44 45M2 14A31 31 0 0 1 32 45M2 26A19 19 0 0 1 20 45"><circle cx="5" cy="41" r="3.500" /></Icon>
      <span className="absolute top-[14px] right-[7px] flex h-8 w-8 items-center justify-center rounded-full bg-[#e04a4e] text-xl text-white">1</span>
    </button>
    <Tool label="通知" className="max-h-[88px] w-full">
      <Icon w={44} h={50} d="M6 34V20C6 12 11 7 16 6C18 0 26 0 28 6C33 7 38 12 38 20V34M5 34H39A3 3 0 0 1 39 41H5A3 3 0 0 1 5 34ZM15 41C16 49 28 49 29 41" />
    </Tool>
    <Tool label="ヘルプ" className="max-h-[94px] w-full">
      <Icon w={64} h={60} d="M43 6A28 28 0 0 0 5 38M15 52A28 28 0 0 0 59 22M24 24C24 14 40 14 40 24C40 31 32 30 32 37M54 1Q55 9 63 10Q55 11 54 19Q53 11 45 10Q53 9 54 1ZM8 41Q9 46 14 47Q9 48 8 53Q7 48 2 47Q7 46 8 41Z"><circle cx="32" cy="44" r="3" /></Icon>
    </Tool>
  </aside>
);

const App: React.FC = () => {
  return (
    <div className="flex h-screen flex-col overflow-hidden bg-[#2e2e2e] font-['Inter','Noto_Sans_CJK_JP',sans-serif] text-[#dbdbdb]">
      <Header />
      <div className="flex min-h-0 flex-1 gap-2 pt-2 pl-1.5">
        <main className="flex min-w-0 flex-1 flex-col gap-2">
          <section className="flex min-h-0 flex-1 flex-col overflow-hidden rounded-lg bg-linear-to-b from-[#1b1c28] to-[#181a22]">
            <div className="flex min-h-0 flex-1">
              <div className="relative min-w-0 flex-1 overflow-hidden">
                <ChartPlot />
                <Legend />
                <Watermark />
              </div>
              <PriceAxis />
            </div>
            <TimeAxis />
            <RangeBar />
          </section>
          <BottomPanel />
        </main>
        <Sidebar />
      </div>
    </div>
  );
};

export default App;
